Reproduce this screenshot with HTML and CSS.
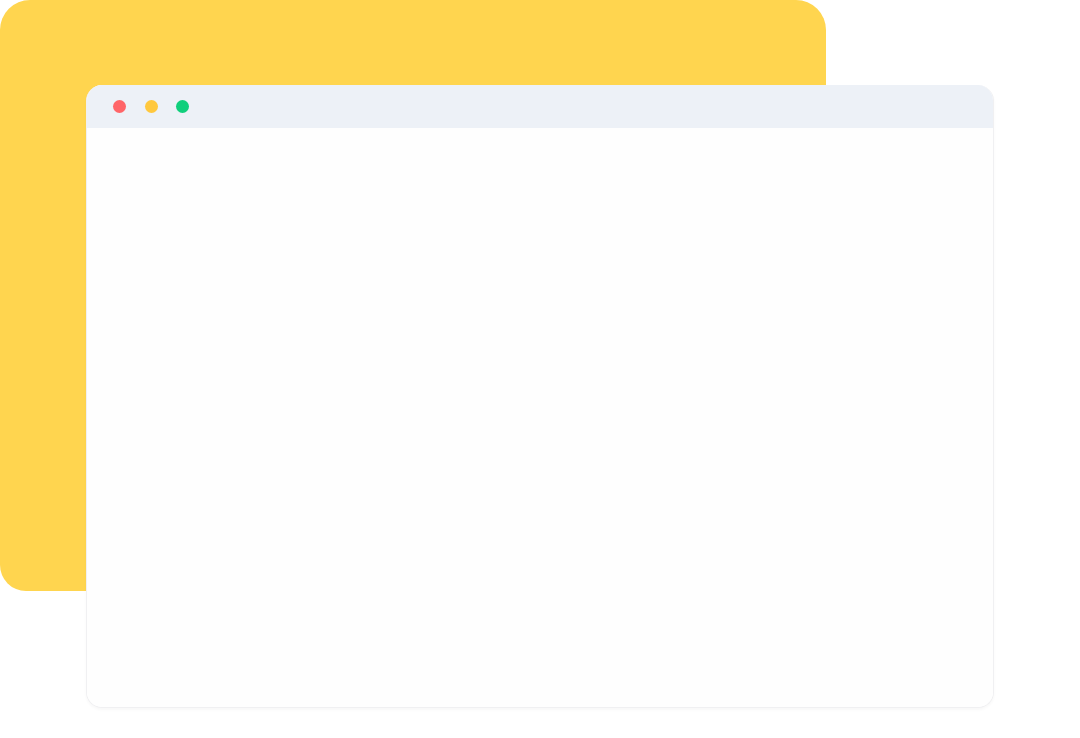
FILE: index.html
```html
<!DOCTYPE html>
<html>
<head>
  <title>Browser Mockup</title>
  <link rel="stylesheet" href="styles.css">
</head>
<body>
  <div class="scene">
    <div class="backdrop"></div>
    <div class="window">
      <div class="titlebar">
        <span class="dot red"></span>
        <span class="dot amber"></span>
        <span class="dot green"></span>
      </div>
      <div class="content"></div>
    </div>
  </div>
</body>
</html>
```
FILE: styles.css
```css
body 
{
  margin: 0;
  background-color: #fff;
  font-family: "Liberation Sans", Arial, sans-serif;
}
.scene 
{
  position: relative;
  width: 1080px;
  height: 738px;
}
.backdrop 
{
  width: 826px;
  height: 591px;
  background-color: #ffd54f;
  border-radius: 30px 30px 26px 26px;
}
.window 
{
  position: absolute;
  left: 86px;
  top: 85px;
  width: 908px;
  height: 623px;
  display: flex;
  flex-direction: column;
  background-color: #fff;
  border: 1px solid #f0f0f2;
  border-top: none;
  box-sizing: border-box;
  border-radius: 16px;
  overflow: hidden;
  box-shadow: 0 2px 3px rgba(0, 0, 0, 0.03);
}
.titlebar 
{
  height: 43px;
  flex-shrink: 0;
  display: flex;
  align-items: center;
  gap: 18.5px;
  padding-left: 26px;
  background-color: #edf1f7;
}
.dot 
{
  width: 13px;
  height: 13px;
  border-radius: 50%;
}
.red 
{
  background-color: #ff6568;
}
.amber 
{
  background-color: #ffc83e;
}
.green 
{
  background-color: #10cf7c;
}
.content 
{
  flex: 1;
  background-color: #fefefe;
}
```
